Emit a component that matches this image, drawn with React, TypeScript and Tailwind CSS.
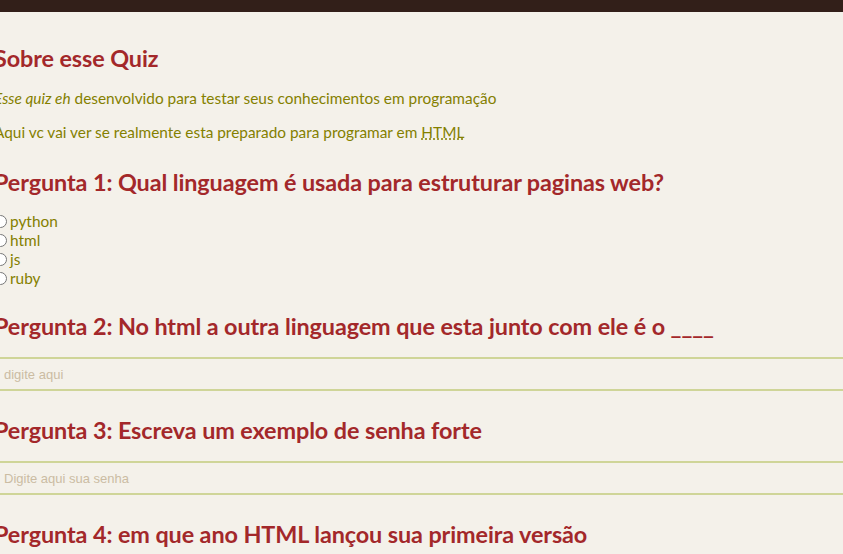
import { Fragment } from 'react'

const heading = 'text-[23.4px] leading-[30px] font-bold tracking-[-0.1px] text-[#a3282a]'
const field =
  "mt-[16px] h-[34px] border-y-2 border-[#cfd598] bg-transparent px-[10px] font-['Liberation_Sans',sans-serif] text-[13px] outline-none placeholder:text-[#cbbca3]"

const options = ['python', 'html', 'js', 'ruby']

export default function App() {
  return (
    <Fragment>
      <div className="min-h-[554px] overflow-hidden bg-[#f4f1ea] font-['Lato',sans-serif]">
        <header className="h-[12px] bg-[#321f19]" />
        <main className="-ml-[6px] flex flex-col pt-[31px]">
          <h2 className={heading}>Sobre esse Quiz</h2>
          <p className="mt-[15px] text-[15.4px] leading-[20px] text-[#848000]">
            <em>Esse quiz eh</em> desenvolvido para testar seus conhecimentos em programação
          </p>
          <p className="mt-[14px] text-[15.4px] leading-[20px] text-[#848000]">
            Aqui vc vai ver se realmente esta preparado para programar em{' '}
            <abbr title="HyperText Markup Language" className="underline decoration-dotted">
              HTML
            </abbr>
          </p>

          <h2 className={`mt-[25px] ${heading}`}>
            Pergunta 1: Qual linguagem é usada para estruturar paginas web?
          </h2>
          <div className="mt-[15px] flex flex-col">
            {options.map((opt) => (
              <label key={opt} className="flex h-[19px] items-center gap-[3px] text-[15.4px] text-[#848000]">
                <input type="radio" name="p1" className="m-0 h-[13px] w-[13px]" />
                {opt}
              </label>
            ))}
          </div>

          <h2 className={`mt-[23px] ${heading}`}>
            Pergunta 2: No html a outra linguagem que esta junto com ele é o ____
          </h2>
          <input type="text" placeholder="digite aqui" className={field} />

          <h2 className={`mt-[24px] ${heading}`}>Pergunta 3: Escreva um exemplo de senha forte</h2>
          <input type="password" placeholder="Digite aqui sua senha" className={field} />

          <h2 className={`mt-[24px] ${heading}`}>Pergunta 4: em que ano HTML lançou sua primeira versão</h2>
        </main>
      </div>
    </Fragment>
  )
}
